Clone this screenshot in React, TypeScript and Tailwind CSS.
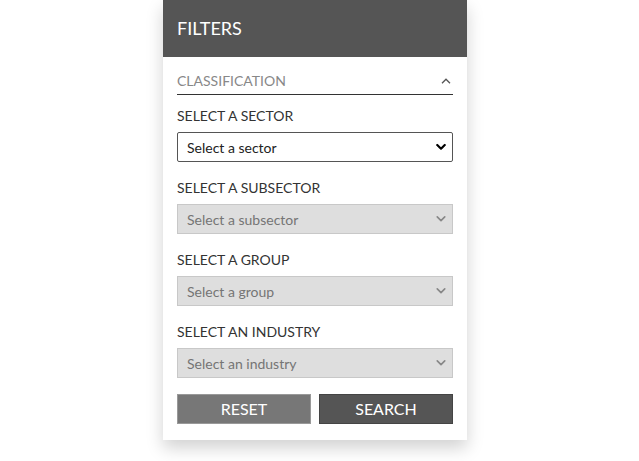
import { useState } from 'react';

const FIELDS = [
  { label: 'SELECT A SUBSECTOR', placeholder: 'Select a subsector' },
  { label: 'SELECT A GROUP', placeholder: 'Select a group' },
  { label: 'SELECT AN INDUSTRY', placeholder: 'Select an industry' },
];

function ChevronDown({ disabled }: { disabled?: boolean }) {
  return (
    <svg
      viewBox="0 0 12 8"
      className={`pointer-events-none absolute right-[7px] top-1/2 h-[7px] w-[10px] -translate-y-1/2 ${
        disabled ? 'text-[#888]' : 'text-black'
      }`}
      fill="none"
      stroke="currentColor"
      strokeWidth={disabled ? 2 : 2.6}
      strokeLinecap="round"
      strokeLinejoin="round"
    >
      <path d="M1.5 1.5 6 6l4.5-4.5" />
    </svg>
  );
}

export default function App() {
  const [open, setOpen] = useState(true);
  const [sector, setSector] = useState('');

  return (
    <div className="min-h-screen bg-white font-['Lato',sans-serif]">
      <div className="ml-[163px] w-[304px] bg-white shadow-[0_8px_16px_rgba(0,0,0,0.18)]">
        <div className="flex h-[57px] items-center bg-[#555] px-[14px]">
          <h1 className="text-[18px] text-white">FILTERS</h1>
        </div>

        <div className="px-[14px] pb-4 pt-[14px]">
          <button
            onClick={() => setOpen(!open)}
            className="flex h-[24px] w-full items-start justify-between border-b border-[#333] pb-[3px] text-left"
          >
            <span className="text-[14px] leading-5 text-[#888]">CLASSIFICATION</span>
            <svg viewBox="0 0 10 6" className="mr-[2px] mt-[7px] h-[6px] w-[10px] text-[#555]" fill="none" stroke="currentColor" strokeWidth={1.3}>
              <path d="M1 5.2 5 1.2l4 4" />
            </svg>
          </button>

          {open && (
            <div>
              <div className="mt-[11px] text-[14px] leading-5 text-[#333]">SELECT A SECTOR</div>
              <div className="relative mt-[6px]">
                <select
                  value={sector}
                  onChange={(e) => setSector(e.target.value)}
                  className="h-[30px] w-full appearance-none rounded-[2px] border border-[#555] bg-white pl-[9px] text-[14px] text-[#222] outline-none"
                >
                  <option value="">Select a sector</option>
                </select>
                <ChevronDown />
              </div>

              {FIELDS.map((f) => (
                <div key={f.label}>
                  <div className="mt-4 text-[14px] leading-5 text-[#333]">{f.label}</div>
                  <div className="relative mt-[6px]">
                    <select
                      disabled
                      className="h-[30px] w-full appearance-none border border-[#c8c8c8] bg-[#dedede] pl-[9px] text-[14px] text-[#757575] outline-none"
                    >
                      <option>{f.placeholder}</option>
                    </select>
                    <ChevronDown disabled />
                  </div>
                </div>
              ))}

              <div className="mt-4 flex gap-2">
                <button className="h-[30px] flex-1 border border-[#999] bg-[#777] text-[16px] text-white">RESET</button>
                <button className="h-[30px] flex-1 border border-[#444] bg-[#555] text-[16px] text-white">SEARCH</button>
              </div>
            </div>
          )}
        </div>
      </div>
    </div>
  );
}
